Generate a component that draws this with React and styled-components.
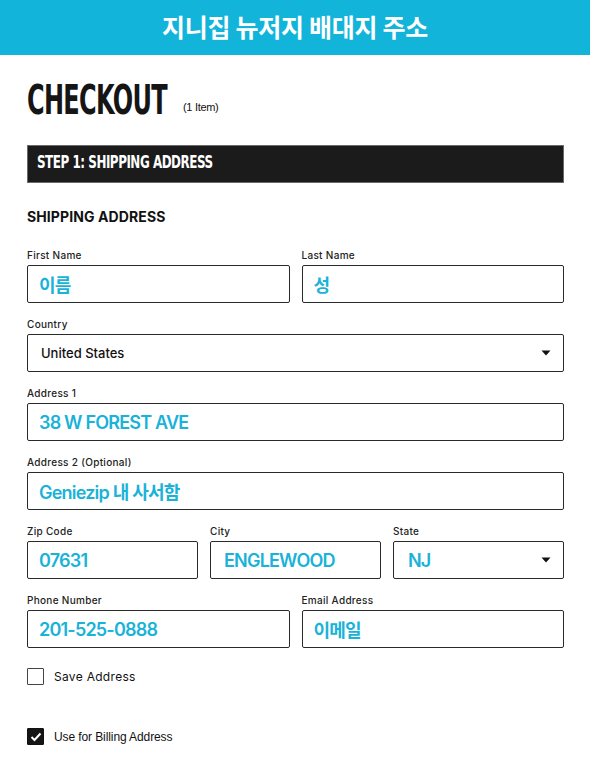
import React from "react";
import styled, { createGlobalStyle } from "styled-components";

const Global = createGlobalStyle`
  html, body { margin: 0; padding: 0; background: #fff; }
  body { font-family: Inter, "Noto Sans CJK KR", sans-serif; color: #111; }
  * { box-sizing: border-box; }
`;

const Page = styled.div`
  width: 590px;
  height: 760px;
  overflow: hidden;
  background: #fff;
`;

const Banner = styled.div`
  height: 55px;
  background: #12b4d9;
  display: flex;
  align-items: center;
  justify-content: center;
  color: #fff;
  font-family: "Noto Sans CJK KR", sans-serif;
  font-weight: 700;
  font-size: 25px;
  letter-spacing: -0.3px;
  padding-bottom: 4px;
`;

const Content = styled.div`
  padding: 0 26px 0 27px;
`;

const TitleRow = styled.div`
  display: flex;
  align-items: baseline;
  gap: 16px;
  margin-top: 20px;
  height: 50px;
`;

const Title = styled.h1`
  margin: 0 -70px 0 0;
  display: inline-block;
  font-family: "DejaVu Sans Condensed", "Liberation Sans Narrow", sans-serif;
  font-weight: 700;
  font-size: 40px;
  line-height: 50px;
  color: #151515;
  transform: scaleX(0.667);
  transform-origin: left center;
  white-space: nowrap;
  letter-spacing: -1px;
`;

const Count = styled.span`
  font-family: "Liberation Sans", Arial, sans-serif;
  font-size: 11px;
  color: #111;
  letter-spacing: -0.3px;
  position: relative;
  top: -3px;
`;

const StepBar = styled.div`
  margin-top: 20px;
  height: 38px;
  background: #1b1b1b;
  border: 1px solid #6a6a6a;
  display: flex;
  align-items: center;
  padding-left: 9px;
`;

const StepText = styled.span`
  font-family: "DejaVu Sans Condensed", "Liberation Sans Narrow", sans-serif;
  font-weight: 700;
  font-size: 17px;
  color: #fff;
  transform: scaleX(0.78);
  transform-origin: left center;
  white-space: nowrap;
  letter-spacing: -0.6px;
  margin-top: -4px;
`;

const SectionTitle = styled.h2`
  margin: 26px 0 0;
  font-family: Inter, sans-serif;
  font-weight: 700;
  font-size: 14px;
  line-height: 16px;
  letter-spacing: 0.1px;
  color: #111;
`;

const Form = styled.div`
  margin-top: 24px;
  display: flex;
  flex-direction: column;
  gap: 15px;
`;

const Row = styled.div`
  display: grid;
  grid-template-columns: ${(p) => p.$cols || "1fr"};
  column-gap: 12px;
`;

const Field = styled.div`
  display: flex;
  flex-direction: column;
`;

const Label = styled.label`
  font-family: Inter, sans-serif;
  font-weight: 500;
  font-size: 10px;
  line-height: 13px;
  letter-spacing: 0.3px;
  color: #222;
  margin-bottom: 3px;
`;

const Box = styled.div`
  height: 38px;
  border: 1.5px solid #2a2a2a;
  border-radius: 2px;
  display: flex;
  align-items: center;
  justify-content: space-between;
  padding: 0 ${(p) => (p.$select ? "12px" : "0")} 0 ${(p) => p.$pad || "11px"};
`;

const Value = styled.span`
  font-family: Inter, "Noto Sans CJK KR", sans-serif;
  font-weight: ${(p) => (p.$plain ? 500 : 600)};
  font-size: ${(p) => (p.$plain ? "13px" : "18px")};
  letter-spacing: ${(p) => (p.$plain ? "0" : "-0.8px")};
  color: ${(p) => (p.$plain ? "#111" : "#19b2d8")};
  white-space: nowrap;
`;

const Caret = () => (
  <svg width="10" height="6" viewBox="0 0 10 6">
    <path d="M0.5 0.5 H9.5 L5 5.5 Z" fill="#111" />
  </svg>
);

const CheckRow = styled.div`
  display: flex;
  align-items: center;
  gap: 10px;
  margin-top: ${(p) => p.$mt};
`;

const CheckBox = styled.span`
  width: 17px;
  height: 17px;
  border: 1.5px solid ${(p) => (p.$checked ? "#111" : "#444")};
  background: ${(p) => (p.$checked ? "#151515" : "#fff")};
  border-radius: 1px;
  display: flex;
  align-items: center;
  justify-content: center;
`;

const CheckLabel = styled.span`
  font-family: ${(p) => (p.$spaced ? "Inter" : "\"Liberation Sans\", Arial")}, sans-serif;
  font-size: 12px;
  font-weight: 400;
  letter-spacing: ${(p) => (p.$spaced ? "0.3px" : "-0.1px")};
  color: #111;
`;

function InputField({ label, value, plain, select, pad }) {
  return (
    <Field>
      <Label>{label}</Label>
      <Box $select={select} $pad={pad}>
        <Value $plain={plain}>{value}</Value>
        {select && <Caret />}
      </Box>
    </Field>
  );
}

export default function App() {
  return (
    <Page>
      <Global />
      <Banner>지니집 뉴저지 배대지 주소</Banner>
      <Content>
        <TitleRow>
          <Title>CHECKOUT</Title>
          <Count>(1 Item)</Count>
        </TitleRow>
        <StepBar>
          <StepText>STEP 1: SHIPPING ADDRESS</StepText>
        </StepBar>
        <SectionTitle>SHIPPING ADDRESS</SectionTitle>
        <Form>
          <Row $cols="1fr 1fr">
            <InputField label="First Name" value="이름" />
            <InputField label="Last Name" value="성" />
          </Row>
          <Row>
            <InputField label="Country" value="United States" plain select pad="13px" />
          </Row>
          <Row>
            <InputField label="Address 1" value="38 W FOREST AVE" />
          </Row>
          <Row>
            <InputField label="Address 2 (Optional)" value="Geniezip 내 사서함" />
          </Row>
          <Row $cols="1fr 1fr 1fr">
            <InputField label="Zip Code" value="07631" />
            <InputField label="City" value="ENGLEWOOD" pad="13px" />
            <InputField label="State" value="NJ" select pad="14px" />
          </Row>
          <Row $cols="1fr 1fr">
            <InputField label="Phone Number" value="201-525-0888" />
            <InputField label="Email Address" value="이메일" />
          </Row>
        </Form>
        <CheckRow $mt="20px">
          <CheckBox />
          <CheckLabel $spaced>Save Address</CheckLabel>
        </CheckRow>
        <CheckRow $mt="43px">
          <CheckBox $checked>
            <svg width="12" height="10" viewBox="0 0 12 10">
              <path d="M1.5 5 L4.5 8 L10.5 1.5" stroke="#fff" strokeWidth="2" fill="none" />
            </svg>
          </CheckBox>
          <CheckLabel>Use for Billing Address</CheckLabel>
        </CheckRow>
      </Content>
    </Page>
  );
}
